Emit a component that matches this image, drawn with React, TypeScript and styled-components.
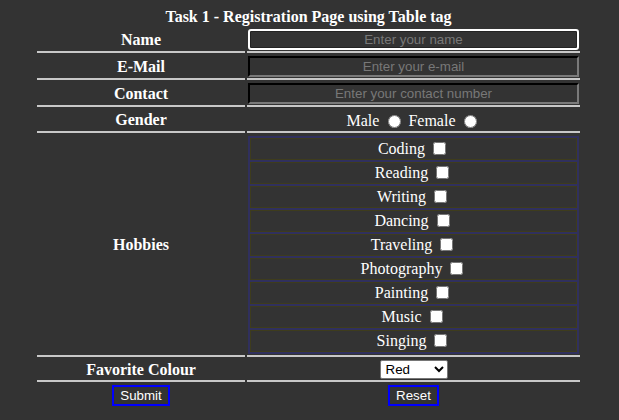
import React from "react";
import styled, { createGlobalStyle } from "styled-components";

const Global = createGlobalStyle`
  html, body { background: #333333; }
  body {
    margin: 8px;
    font-family: "Liberation Serif", "Times New Roman", serif;
    color: #ffffff;
  }
`;

const Form = styled.form`
  margin: 0;
`;

const Table = styled.table`
  width: 547px;
  margin: 0 0 0 27px;
  border-spacing: 2px;
  color: #fff;
`;

const Caption = styled.caption`
  font-weight: bold;
  font-size: 16px;
  line-height: 18px;
`;

const Label = styled.th<{ $plain?: boolean }>`
  width: 206px;
  padding: 1px;
  font-size: 16px;
  font-weight: bold;
  text-align: center;
  border-bottom: ${(p) => (p.$plain ? "none" : "2px solid #c8c8c8")};
`;

const Cell = styled.td<{ $plain?: boolean }>`
  padding: 1px;
  font-size: 16px;
  text-align: center;
  border-bottom: ${(p) => (p.$plain ? "none" : "2px solid #c8c8c8")};
`;

const TextInput = styled.input<{ $focused?: boolean }>`
  display: block;
  box-sizing: border-box;
  width: 100%;
  height: 21px;
  margin: 0;
  padding: 1px 2px;
  background: #333333;
  color: #fff;
  font-family: "Liberation Sans", Arial, sans-serif;
  font-size: 13.33px;
  text-align: center;
  border: 2px inset #6a6a6a;
  border-top-color: #232323;
  border-left-color: #232323;
  border-right-color: #7a7a7a;
  border-bottom-color: #7a7a7a;
  border-radius: 0;
  outline: none;
  ${(p) =>
    p.$focused
      ? `border: 2px solid #ffffff; border-radius: 3px; box-shadow: inset 0 0 0 1px #232323;`
      : ""}
  &::placeholder {
    color: #787878;
  }
`;

const GenderLine = styled.div`
  display: flex;
  align-items: center;
  justify-content: center;
  height: 20px;
  padding-top: 2px;
  box-sizing: border-box;
  line-height: 18px;
`;

const Choice = styled.input`
  margin: 0 3px 0 5px;
  width: 13px;
  height: 13px;
  accent-color: #fff;
`;

const Gap = styled.span`
  width: 4px;
`;

const Tick = styled.input`
  margin: 0 3px 0 4px;
  width: 13px;
  height: 13px;
  vertical-align: -1px;
`;

const Hobbies = styled.table`
  width: 100%;
  border-spacing: 2px;
  background: #30305e;
`;

const HobbyCell = styled.td`
  padding: 1px;
  height: 18px;
  background: #333333;
  border: 1px solid #3e3c1c;
  text-align: center;
  font-size: 16px;
  line-height: 18px;
`;

const Select = styled.select`
  display: block;
  width: 68px;
  height: 19px;
  margin: 0 auto;
  padding: 0 1px;
  background: #fff;
  color: #000;
  font-family: "Liberation Sans", Arial, sans-serif;
  font-size: 13.33px;
  border: 1px solid #767676;
  border-radius: 2px;
`;

const Button = styled.button`
  display: block;
  margin: 0 auto;
  padding: 1px 6px;
  height: 21px;
  background: #333333;
  color: #fff;
  font-family: "Liberation Sans", Arial, sans-serif;
  font-size: 13.33px;
  border: 2px solid #0000ff;
  border-radius: 0;
`;

const hobbies = [
  "Coding",
  "Reading",
  "Writing",
  "Dancing",
  "Traveling",
  "Photography",
  "Painting",
  "Music",
  "Singing",
];

export default function App() {
  return (
    <>
      <Global />
      <Form onSubmit={(e) => e.preventDefault()}>
        <Table>
          <Caption>Task 1 - Registration Page using Table tag</Caption>
          <tbody>
            <tr>
              <Label>Name</Label>
              <Cell>
                <TextInput $focused placeholder="Enter your name" />
              </Cell>
            </tr>
            <tr>
              <Label>E-Mail</Label>
              <Cell>
                <TextInput placeholder="Enter your e-mail" />
              </Cell>
            </tr>
            <tr>
              <Label>Contact</Label>
              <Cell>
                <TextInput placeholder="Enter your contact number" />
              </Cell>
            </tr>
            <tr>
              <Label>Gender</Label>
              <Cell>
                <GenderLine>
                  Male<Gap />
                  <Choice type="radio" name="g" />
                  <Gap />Female<Gap />
                  <Choice type="radio" name="g" />
                </GenderLine>
              </Cell>
            </tr>
            <tr>
              <Label>Hobbies</Label>
              <Cell>
                <Hobbies>
                  <tbody>
                    {hobbies.map((h) => (
                      <tr key={h}>
                        <HobbyCell>
                          {h} <Tick type="checkbox" />
                        </HobbyCell>
                      </tr>
                    ))}
                  </tbody>
                </Hobbies>
              </Cell>
            </tr>
            <tr>
              <Label>Favorite Colour</Label>
              <Cell>
                <Select defaultValue="Red">
                  <option>Red</option>
                  <option>Green</option>
                  <option>Blue</option>
                </Select>
              </Cell>
            </tr>
            <tr>
              <Cell $plain>
                <Button type="submit">Submit</Button>
              </Cell>
              <Cell $plain>
                <Button type="reset">Reset</Button>
              </Cell>
            </tr>
          </tbody>
        </Table>
      </Form>
    </>
  );
}
